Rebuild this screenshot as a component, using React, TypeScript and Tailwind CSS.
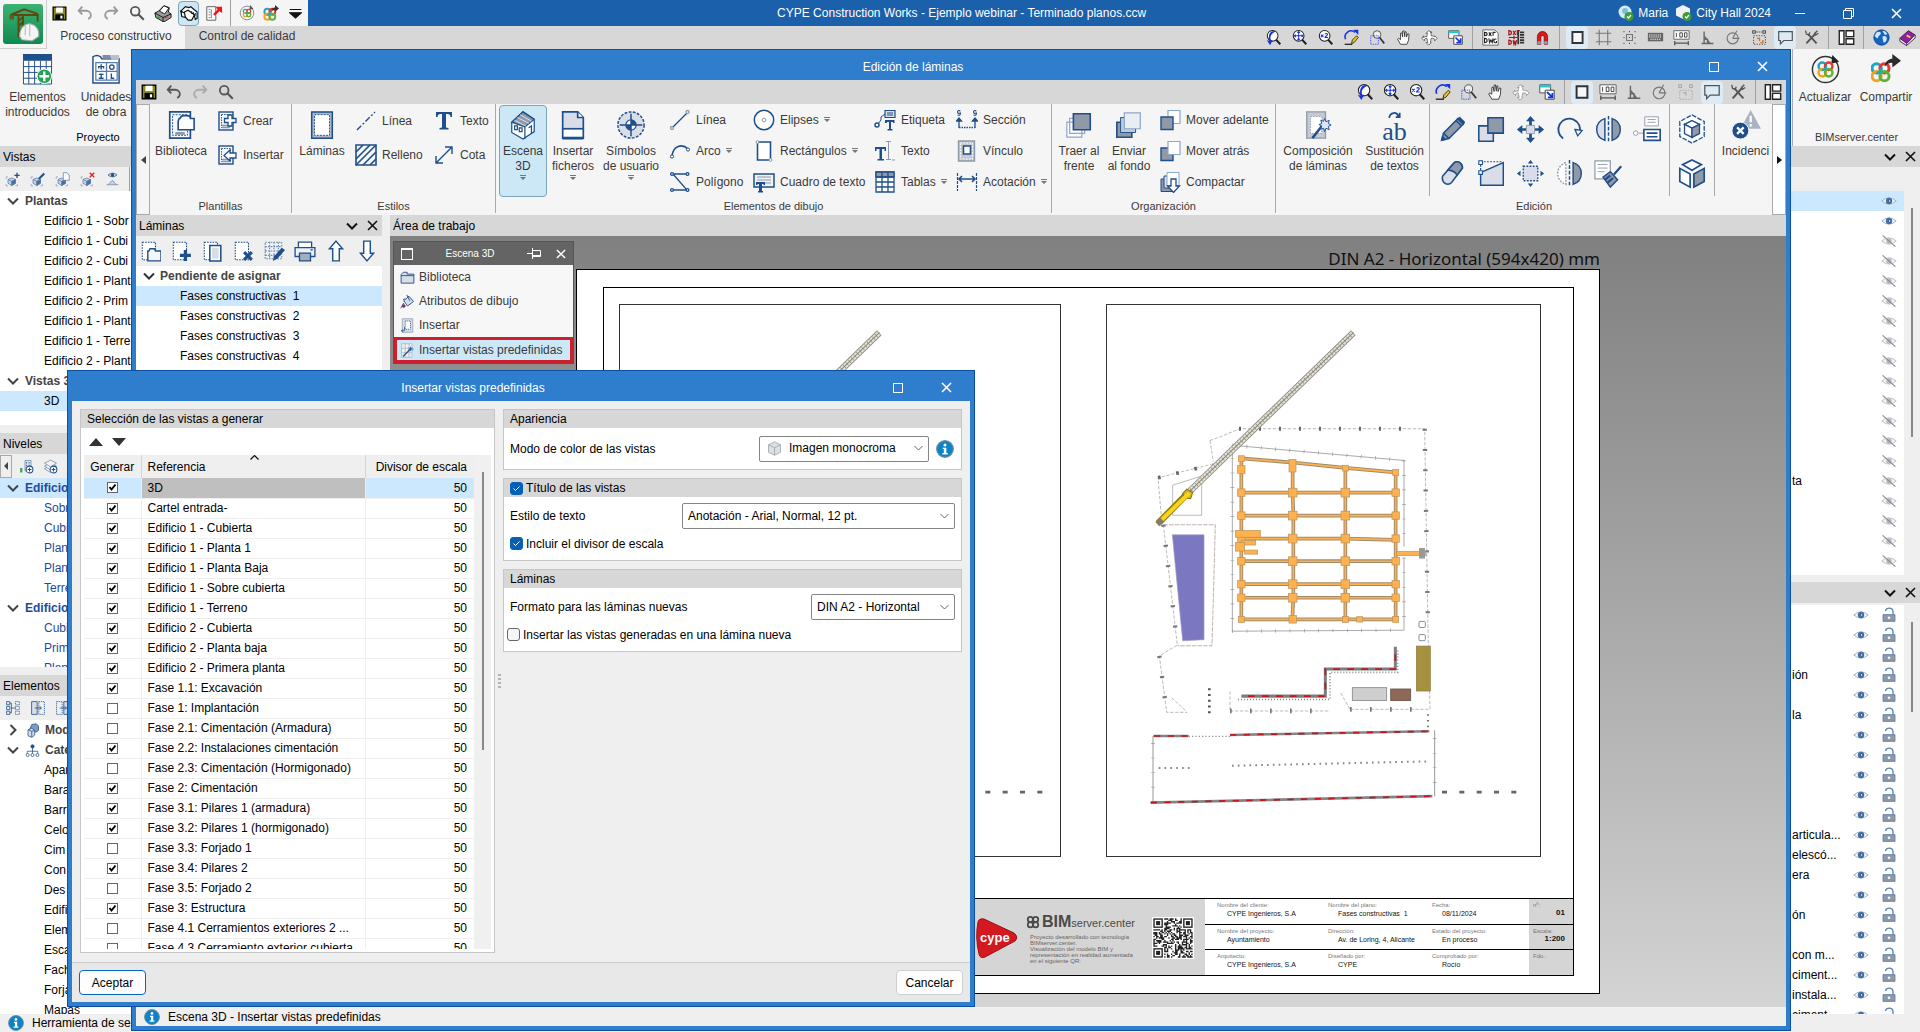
import React from "react";

const NAVY = "#1f4f8a";
const PALE = "#d9dde8";
const SLATE = "#8f99a8";

type IconProps = { n: string; s?: number; c?: string };

const star = (
  <g fill="none" strokeWidth="2.300">
    <circle cx="8" cy="8" r="3.500" stroke="#1ba8c8" />
    <circle cx="14" cy="8" r="3.500" stroke="#e2382f" />
    <circle cx="8" cy="14" r="3.500" stroke="#f5a11c" />
    <circle cx="14" cy="14" r="3.500" stroke="#5cb338" />
    <path d="M11.500 8a3.500 3.500 0 0 1-3.500 3.500" stroke="#1ba8c8" />
  </g>
);

const lens = (
  <g>
    <circle cx="9" cy="8" r="6.300" fill="#fff" stroke="#222" strokeWidth="1.200" />
    <path d="M13 12.500l5 5.500" stroke="#222" strokeWidth="2.400" />
  </g>
);

const miniCube = (
  <g stroke="#5b7ba5" fill="#c9d3e2" strokeWidth="1">
    <path d="M9 8l5 2v5l-5 3-5-3v-5z" />
    <path d="M4 10l5 2.500 5-2.500M9 12.500V18" fill="none" />
    <path d="M1.500 9V6.500H4M1.500 16v2.500H4M16.500 16v2.500H14" fill="none" stroke="#8ba0bd" />
    <path d="M9 12.500l5-2.500v5l-5 3z" fill="#47709f" />
  </g>
);

const pageDash = (
  <g>
    <rect x="3" y="2" width="14" height="18" fill="#f4f6f9" stroke={NAVY} strokeWidth="1.400" />
    <rect x="5.500" y="4.500" width="9" height="13" fill="none" stroke={NAVY} strokeDasharray="1.500 1" strokeWidth="0.900" />
    <path d="M6 15.500h8M6 17.500h8" stroke={SLATE} strokeWidth="1.400" />
  </g>
);

const sheetDash = <path d="M3 2h12v16H3z" fill="#fff" stroke={NAVY} strokeDasharray="1.500 1" />;

/* Drawings on a 20-unit grid */
const SMALL: Record<string, React.ReactNode> = {
  save: (
    <g>
      <path d="M2.500 2.500h15v15h-15z" fill="#8a8a14" stroke="#000" strokeWidth="1.500" />
      <path d="M6 3h8v6H6z" fill="#fff" />
      <path d="M5 11h10v6H5z" fill="#000" />
      <path d="M11 12.500h2.500V16H11z" fill="#fff" />
    </g>
  ),
  undo: <path d="M7 3L3 7.500l4 4M3.500 7.500h8a5 5 0 0 1 5 5v0a4.500 4.500 0 0 1-3 4" fill="none" stroke="currentColor" strokeWidth="2" />,
  redo: <path d="M13 3l4 4.500-4 4M16.500 7.500h-8a5 5 0 0 0-5 5v0a4.500 4.500 0 0 0 3 4" fill="none" stroke="currentColor" strokeWidth="2" />,
  search: <g fill="none" stroke="#555"><circle cx="8" cy="8" r="4.800" strokeWidth="2" /><path d="M11.500 11.500l6 6" strokeWidth="2.400" /></g>,
  printer: (
    <g stroke="#111" strokeWidth="1">
      <path d="M1 10l4-2 6-6 6 2-1 5 3 2v4l-8 5-9-5z" fill="#9a9a9a" />
      <path d="M6 8l5-6 5.500 2.500L12 11z" fill="#fff" />
      <path d="M1 10l9 5 9-4M10 15v5" fill="none" />
      <path d="M4 14l3 1.500" stroke="#2fae2f" strokeWidth="1.500" />
      <path d="M12 15.500l3-1.500" stroke="#e22" strokeWidth="1.500" />
    </g>
  ),
  plotter: (
    <g stroke="#111" strokeWidth="1.300" fill="#fff">
      <path d="M1 8l5-5 4 1 2-1 7 6v7l-2 1-1-4-7-5-4 4z" />
      <path d="M5 9l4-2 7 5-3 6H9l-5-6z" />
      <path d="M1 8l4 2 1 5-4-1z" />
      <path d="M13 8v3M15 9v3M17 10v3" strokeWidth="1" />
    </g>
  ),
  exportRed: (
    <g>
      <path d="M2 3h10v15H2z" fill="#fff" stroke="#555" />
      <path d="M4 6h2M4 9h2M4 12h2M4 15h2M7 6v10" stroke="#777" />
      <path d="M9 11l5-5-2-3h7v7l-3-2-5 5z" fill="#f11" />
    </g>
  ),
  bimRefresh: (
    <g>
      <circle cx="10" cy="10" r="8.500" fill="none" stroke="#888" strokeWidth="1.200" />
      <path d="M14 0l4 5-5 1z" fill="#555" />
      <g transform="translate(2.300 2.300) scale(.7)">{star}</g>
    </g>
  ),
  bimShare: (
    <g>
      <g transform="translate(-3 0) scale(1.050)">{star}</g>
      <path d="M10 10c0-5 3-7 5-7V0l5 4.500-5 4V6c-2 0-4 1-5 4z" fill="#333" />
    </g>
  ),
  more: <path d="M1 4h18M1 9h18l-9 8z" fill="#111" stroke="#111" strokeWidth="1.600" />,
  zPrev: <g>{lens}<path d="M14 3c-7-3-11 3-9 11l-3-1 4 6 3-6H7C5 9 8 4 14 3z" fill="#1733e0" /></g>,
  zFit: <g>{lens}<path d="M9 3v10M4 8h10M7.500 4.500L9 3l1.500 1.500M7.500 11.500L9 13l1.500-1.500M5.500 6.500L4 8l1.500 1.500M12.500 6.500L14 8l-1.500 1.500" stroke="#1733e0" fill="none" strokeWidth="1.200" /></g>,
  zX2: <g>{lens}<path d="M4.500 6.500l3 3M7.500 6.500l-3 3M9.500 6q1.500-1.500 3 0c0 2-3 2.500-3 4h3.500" stroke="#1733e0" fill="none" strokeWidth="1.300" /></g>,
  redraw: <g><path d="M3 12A7 7 0 0 1 14 4" fill="none" stroke="#1733e0" strokeWidth="1.800" /><path d="M12 1h6v6z" fill="#1733e0" /><path d="M11 13l5-5 2 2-5 6-3 1z" fill="#f0c419" stroke="#222" /><path d="M2 18h9" stroke="#222" strokeWidth="1.500" /></g>,
  zWin: <g><circle cx="9.500" cy="6.500" r="4.500" fill="#eee" stroke="#444" /><path d="M12.500 10l5.500 7" stroke="#333" strokeWidth="2" /><path d="M2 8h9v10H2z" fill="none" stroke="#1733e0" strokeDasharray="1 1" /></g>,
  hand: <path d="M6.500 18L3 12l1.500-1L6.500 12.500V5l1.500-.5 1 5V2.500l1.500-.5L11.500 9V3.500l1.500-.3.500 6.300 1.500-4 1.500.5-.5 7-2 5z" fill="#fff" stroke="#333" />,
  orbit: <path d="M9 2l-3 3h2c-1 2-1 3-1 4-2 0-3 0-4 1l0-2-2 3 3 3v-2c1-1 3-1 3-1 0 2 1 3 1 5H6l3 3 3-3h-1c0-2 1-3 1-5 2 0 3 0 4 1v2l3-3-3-3v1c-1-1-3-1-4-1 0-1 0-3-1-4h2z" fill="#fff" stroke="currentColor" />,
  cascade: <g><path d="M2 2h12v9H2z" fill="#fff" stroke="#444" /><path d="M2 2h12v3H2z" fill="#29c6d6" /><path d="M8 8h10v10H8z" fill="#fff" stroke="#333" /><path d="M10 10l6 6M16 11v5h-5" stroke="#1733e0" strokeWidth="2" fill="none" /></g>,
  dxf: <g><path d="M1 1h14l4 4v14H1z" fill="#fff" stroke="#555" /><path d="M3 4q3 0 3 2t-3 2zM8 4l3 4M11 4L8 8M13 8V4h3M3 11q3 0 3 2.500T3 16zM8 11l1 5 1.500-3 1.500 3 1-5M17 12q-3-1-3 2t3 2v-2" stroke="#222" fill="none" strokeWidth="1.300" /></g>,
  dxfRed: <g><path d="M12 2v16M14 4h5M14 7h5M14 10h5M14 13h5M14 16h5" stroke="#333" strokeWidth="2" /><path d="M1 2q3 0 3 2.500T1 7zM6 2l3 5M9 2L6 7M11 7V2h3M1 13q3 0 3 2.500T1 18zM6 13l1 5 1-3 1 3 1-5M1 10h12M7 8v4" stroke="#a11515" fill="none" strokeWidth="1.400" /></g>,
  magnet: <g><path d="M4 18V9a6 6 0 0 1 12 0v9h-4V9.500a2 2 0 0 0-4 0V18z" fill="#e01818" stroke="#600" strokeWidth=".8" /><path d="M4 14.500h4V18H4zM12 14.500h4V18h-4z" fill="#8d9db5" /></g>,
  rect: <path d="M4 3.500h12v13H4z" fill="#f4f8fb" stroke="#333" strokeWidth="2.200" />,
  grid: <path d="M5 1v18M15 1v18M1 5h18M1 15h18" stroke="#777" fill="none" strokeWidth="1.300" />,
  snap: <g><path d="M6.500 6.500h7v7h-7z" fill="none" stroke="#777" strokeWidth="1.300" /><path d="M3 3h1M9.500 3h1M16 3h1M3 10h1M16 10h1M3 17h1M9.500 17h1M16 17h1M9.500 10h1" stroke="#333" strokeWidth="1.400" /></g>,
  keyboard: <g><path d="M1 4.500h18v10H1z" fill="#666" /><path d="M2.500 7h15M2.500 9.500h15M4 12h12" stroke="#eee" strokeDasharray="1.500 1" strokeWidth="1.200" /></g>,
  ruler: <g><path d="M1 2h18v10H1z" fill="#fff" stroke="#555" /><path d="M4 4.500v5M8 4.500h3v5H8zM13.500 4.500h3v5h-3z" stroke="#333" fill="none" /><path d="M2 16.500h16M2 14v5M18 14v5" stroke="#555" strokeWidth="1.500" /></g>,
  perp: <path d="M3 17h14M6 3v14M6 8l7 9M6 12h4v5" stroke="#666" strokeWidth="1.600" fill="none" />,
  angle: <g fill="none" stroke="#777" strokeWidth="1.300"><circle cx="9" cy="11" r="6.500" /><path d="M9 11h8M9 11l5-9" /></g>,
  dots: <g stroke="#555" fill="none" strokeWidth="1.300"><path d="M3 8h14v10H3z" strokeDasharray="1.500 1.500" /><path d="M2 2h3v3H2zM14 2h3v3h-3z" /><path d="M6 3.500h7" strokeDasharray="2 1" /><path d="M7 11h3v3M14 13v3h-3" stroke="#c9772f" strokeWidth="1.600" /></g>,
  dotsOff: <g stroke="#aaa" fill="none" strokeWidth="1.200"><path d="M3 8h14v10H3z" strokeDasharray="1.500 1.500" /><path d="M2 2h3v3H2zM14 2h3v3h-3zM7 11h3v3" /></g>,
  comment: <path d="M2 3h16v10.500H8l-4 4v-4H2z" fill="none" stroke="#555" strokeWidth="1.400" />,
  tools: <g stroke="#555" fill="none"><path d="M4 17L15 5" strokeWidth="2.200" /><path d="M16 17L6 6" strokeWidth="2.200" /><path d="M3 2l1 4 3 1 1-3M17 2l-3 3 1 2 3-2" strokeWidth="1.500" /></g>,
  layout: <path d="M1.500 2h5.500v16H1.500zM9.500 2h9v7h-9zM9.500 11.500h9V18h-9z" fill="#fff" stroke="#222" strokeWidth="1.600" />,
  globe: <g><circle cx="10" cy="10" r="9" fill="#1565c0" stroke="#0b3f86" /><path d="M4 4c4-2 6 0 5 2s-3 2-3 4-3 0-4-2zM11 9c4-2 6 1 5 4s-4 4-4 1zM11 2c3 0 5 2 6 4l-3 1z" fill="#cfe6fa" /></g>,
  book: <g stroke="#40104d"><path d="M1 11l10-9 8 5-10 10z" fill="#8d1fa0" /><path d="M1 11v3.500l8 5V17zM9 19.500l10-9V7" fill="#eee" /><path d="M9 7.500l4.500 2.500" stroke="#f4d03f" strokeWidth="2.200" /></g>,
  cubePlus: <g>{miniCube}<path d="M16 1v7M12.500 4.500h7" stroke={NAVY} strokeWidth="1.800" /></g>,
  cubePen: <g>{miniCube}<path d="M11 10l1-3 6-6 2 2-6 6z" fill={NAVY} /></g>,
  cubeCopy: <g>{miniCube}<path d="M11 1h5l3 3v7h-8z" fill="#fff" stroke="#5b7ba5" /></g>,
  cubeDel: <g>{miniCube}<path d="M13 1l6 6M19 1l-6 6" stroke="#e32222" strokeWidth="1.800" /></g>,
  viewEye: <g stroke={NAVY} fill="none"><path d="M4 4q6-5 12 0-6 5-12 0z" /><circle cx="10" cy="4" r="2" fill={NAVY} /><path d="M2 17h16M4 17l6-6 5 6" stroke="#6b88ad" fill="#c9d3e2" /></g>,
  levels: <g><path d="M8 2h8v14H8z" fill="#dfe5ee" stroke="#6b88ad" /><path d="M10 4v10M13.500 4v6" stroke="#47709f" strokeDasharray="2 1.500" strokeWidth="1.500" /><path d="M3 18v-6" stroke="#3aa757" strokeWidth="3" /><circle cx="14" cy="14" r="4.500" fill="#fff" stroke={NAVY} strokeWidth="1.400" /><path d="M14 11.500v5M11.500 14h5" stroke={NAVY} strokeWidth="1.400" /></g>,
  layers: <g fill="#f4f4f4" stroke="#6b88ad"><path d="M10 9l8 4-8 5-8-5z" /><path d="M10 5.500l8 4-8 5-8-5z" /><path d="M10 1.500l8 4-8 5-8-5z" /><circle cx="14" cy="14" r="4.500" fill="#fff" stroke={NAVY} strokeWidth="1.400" /><path d="M14 11.500v5M11.500 14h5" stroke={NAVY} strokeWidth="1.400" /></g>,
  expand1: <g fill="none" stroke={NAVY}><path d="M2 2h4v4H2zM2 8h4v4H2zM2 14h4v4H2zM6 4h2v12H6M8 10h5" /><path d="M13 2h5v4h-5zM13 8h5v4h-5zM13 14h5v4h-5z" strokeDasharray="1.500 1" /></g>,
  expand2: <g fill="none" stroke={NAVY}><path d="M2 2h7v16H2z" fill={PALE} /><path d="M11 2h7v16h-7z" strokeDasharray="1.500 1" /><path d="M6 10h8M12 8l2.500 2-2.500 2" /></g>,
  expand3: <g fill="none" stroke={NAVY}><path d="M2 2h7v16H2z" strokeDasharray="1.500 1" /><path d="M11 2h7v16h-7z" fill={PALE} /><path d="M6 10h8M12 8l2.500 2-2.500 2" /></g>,
  cubeBlue: <g stroke={NAVY}><path d="M9 2l6-1 3 3v6l-3 2H9L6 9z" fill="#7f9cc0" /><path d="M4 9l5-2 4 3v6l-4 3-5-2z" fill={PALE} /><path d="M4 9l5 2 4-1M9 11v8" fill="none" /></g>,
  tree: <g fill="#fff" stroke={NAVY}><path d="M10 6v5M3 14v-3h14v3M10 11v3" fill="none" /><circle cx="10" cy="4.500" r="2.200" fill={NAVY} /><circle cx="3.500" cy="16" r="2" /><circle cx="10" cy="16" r="2" /><circle cx="16.500" cy="16" r="2" /></g>,
  eye: <g><path d="M1 10q9-8 18 0-9 8-18 0z" fill="#f2f5f9" stroke="#8da3bf" /><circle cx="10" cy="10" r="4" fill="#4a719f" /><circle cx="10.800" cy="10" r="1.600" fill="#dfe7f1" stroke={NAVY} /></g>,
  eyeOff: <g><path d="M1 10q9-8 18 0-9 8-18 0z" fill="#f4f4f4" stroke="#b3b3b3" /><circle cx="10" cy="10" r="3.400" fill="#b3b9c2" /><path d="M2 3l16 14" stroke="#868b93" strokeWidth="1.500" /></g>,
  lock: <g><path d="M5.500 5q1-3.500 5-3.500T15 5.500V10" fill="none" stroke="#5b82b0" strokeWidth="1.600" /><path d="M2.500 9.500h15v8.500h-15z" fill="#8f99a8" stroke="#5b7ba5" /><circle cx="10" cy="13.500" r="1.500" fill="#fff" /></g>,
  shLib: <g>{sheetDash}<path d="M8 10h1l1-2h4l1 2h5v9H8z" fill="#f4f6f9" stroke={NAVY} strokeWidth="1.300" /></g>,
  shAdd: <g>{sheetDash}<path d="M14 9v10M9 14h10" stroke={NAVY} strokeWidth="3" /></g>,
  shCopy: <g>{sheetDash}<path d="M8 5h10v14H8z" fill="#fff" stroke={NAVY} strokeWidth="1.400" /><path d="M10 7h6v10h-6z" fill={PALE} /></g>,
  shDel: <g>{sheetDash}<path d="M11 11l7 7M18 11l-7 7" stroke={NAVY} strokeWidth="2.800" /></g>,
  shEdit: <g><path d="M2 2h15v15H2zM2 6h15M2 10h15M2 14h15M6 2v15M10 2v15M14 2v15" fill="#eef1f6" stroke="#6b88ad" strokeDasharray="1.500 1" /><path d="M9 19l1-4 7-8 3 2-7 8z" fill={NAVY} /></g>,
  shPrint: <g stroke={NAVY} strokeWidth="1.200"><path d="M4 2h12v5H4z" fill="#fff" /><path d="M1 7h18v8H1z" fill="#eef1f6" /><path d="M5 12h10v7H5z" fill="#a4afbe" /><path d="M15 9h2" /></g>,
  up: <path d="M10 1l6 7h-3v11H7V8H4z" fill="#fff" stroke={NAVY} strokeWidth="1.300" />,
  down: <path d="M10 19l6-7h-3V1H7v11H4z" fill="#fff" stroke={NAVY} strokeWidth="1.300" />,
  folder: <path d="M1.500 6l3-3h5v2.500h9v12h-17zM1.500 7.500h17" fill={PALE} stroke={NAVY} strokeWidth="1.200" />,
  bucket: <g stroke={NAVY} strokeWidth="1.200"><path d="M5 9l7-6 6 7-8 6z" fill={PALE} /><path d="M1 19l4-7M9 1l4 8M4 8l3-2" fill="none" /><circle cx="5" cy="16" r="2.400" fill="#7a2c55" stroke="none" /></g>,
  insert: <g><path d="M3 1h14v18H3z" fill={PALE} stroke={SLATE} /><path d="M7 4h7v11H7z" fill="#fff" stroke={NAVY} strokeDasharray="1.500 1" /><path d="M6 12v5H2M4 15l-2 2 2 2" stroke={NAVY} fill="none" /></g>,
  wand: <g><path d="M2 1h14v18H2zM2 7h14M2 13h14M7 1v18M12 1v18" fill="#eef0f4" stroke="#aab2be" /><path d="M4 18l9-9" stroke={NAVY} strokeWidth="1.600" /><path d="M14 5v6M11 8h7M12 6l4 4M16 6l-4 4" stroke={NAVY} /></g>,
  info: <g><circle cx="10" cy="10" r="9.300" fill="#0a84c8" stroke="#7d8b96" strokeWidth="1.200" /><circle cx="10" cy="5.500" r="1.700" fill="#fff" /><path d="M7.500 8.500h4v6h1.500v1.500h-6v-1.500h1.700V10H7.500z" fill="#fff" /></g>,
  cubeGray: <g stroke="#9a9fa6" fill="#dcdfe3"><path d="M10 1l8 4v10l-8 4-8-4V5z" /><path d="M2 5l8 4 8-4M10 9v10" fill="none" /></g>,
};

/* Drawings on a 22-unit grid, used beside ribbon labels */
const MED: Record<string, React.ReactNode> = {
  crear: <g>{pageDash}<path d="M12 5h4v3.500h4v4h-4V16h-4v-3.500H8.500v-4H12z" fill="#fff" stroke={NAVY} strokeWidth="1.300" /></g>,
  insertar: <g>{pageDash}<path d="M20 9v5h-6v3l-6-5.500 6-5.500v3z" fill="#fff" stroke={NAVY} strokeWidth="1.300" /></g>,
  lineStyle: <path d="M2 20L20 2" stroke={NAVY} strokeWidth="1.400" strokeDasharray="6 2 2 2" />,
  hatch: <g stroke={NAVY} strokeWidth="1.600" fill="none"><path d="M1 1h20v20H1z" /><path d="M1 8l7-7M1 15L15 1M1 21L21 1M8 21L21 8M15 21l6-6" /></g>,
  bigT: <path d="M3 2h16v5h-1.500c0-2-1-3-3-3H13v13.500l2.500.5v1.500h-9V18l2.500-.5V4H7.500c-2 0-3 1-3 3H3z" fill={NAVY} />,
  dim: <path d="M3 19L19 3M3 12v7h7M12 3h7v7" stroke={NAVY} strokeWidth="1.400" fill="none" />,
  line: <g stroke={NAVY} strokeWidth="1.300" fill="#fff"><path d="M3 19L19 3" /><circle cx="3" cy="19" r="1.500" stroke={SLATE} /><circle cx="18.500" cy="3" r="1.500" stroke={SLATE} /></g>,
  arc: <g stroke={NAVY} strokeWidth="1.600" fill="none"><path d="M3 16C4 6 13 3 19 9" /><circle cx="3" cy="16.500" r="1.600" fill="#fff" strokeWidth="1" /><circle cx="19" cy="9.500" r="1.600" fill="#fff" strokeWidth="1" /></g>,
  poly: <g stroke={NAVY} strokeWidth="1.300" fill="none"><path d="M18.500 3H3M4 3l14 16H3" /><circle cx="3" cy="3" r="1.400" fill="#fff" /><circle cx="18.500" cy="3" r="1.400" fill="#fff" /><circle cx="3" cy="19" r="1.400" fill="#fff" /><circle cx="18.500" cy="19" r="1.400" fill="#fff" /></g>,
  ellipse: <g stroke={NAVY} fill="#fff"><circle cx="11" cy="11" r="9.700" strokeWidth="1.500" /><circle cx="11" cy="11" r="1.800" stroke={SLATE} /></g>,
  rectangle: <g stroke={NAVY} fill="#fff"><path d="M4.500 2h13v18h-13z" strokeWidth="1.600" /><circle cx="4.500" cy="2" r="1.400" stroke={SLATE} /><circle cx="17.500" cy="20" r="1.400" stroke={SLATE} /></g>,
  textbox: <g><path d="M1 3h20v13H1z" fill="#eef1f6" stroke={NAVY} strokeWidth="1.500" /><path d="M4 6h14M4 9h14M12 12h6" stroke={SLATE} /><path d="M3 11h9v3h-1.500v-1H9v7h1v1.500H5V20h1v-7H4.500v1H3z" fill={NAVY} /></g>,
  tag: <g stroke={NAVY} fill="#fff"><path d="M11 1.500h10v7H11z" fill={PALE} strokeWidth="1.200" /><path d="M13 4h6M13 6h6M11 5L7 8v3l-3 4" fill="none" /><circle cx="3" cy="16" r="2" strokeWidth="1.500" /><path d="M11 11h9.500v3H19v-1h-2v7h1.500v1.500h-5V20H15v-7h-2v1h-2z" fill={NAVY} stroke="none" /></g>,
  text: <g><path d="M1 7h11v4h-1.500V9H8v10h2v1.500H3.500V19h2V9h-3v2H1z" fill={NAVY} /><path d="M14.500 1.500v18M12 1.500h5M12 19.500h5M18 20h3" stroke={SLATE} fill="none" /></g>,
  table: <g stroke={NAVY} strokeWidth="1.300"><path d="M2 1h18v20H2z" fill="#fff" /><path d="M2 1h18v5H2z" fill={SLATE} /><path d="M2 6h18M2 11h18M2 16h18M8 1v20M14 1v20" fill="none" /></g>,
  section: <g stroke={NAVY} fill="none" strokeWidth="1.300"><path d="M3 18.500h16" strokeDasharray="1.500 1" strokeWidth="1.600" /><path d="M3 19v-8M19 19v-8" /><path d="M.5 12L3 9l2.500 3zM16.500 12L19 9l2.500 3z" fill={NAVY} /><path d="M4.500 2q-3-1-3 1t3 1q0 3-3 2M20.500 2q-3-1-3 1t3 1q0 3-3 2" strokeWidth="1.100" /></g>,
  link: <g><path d="M2.500 1h16v20h-16z" fill="#c4c9d2" stroke={SLATE} strokeWidth="1.400" /><path d="M4.500 3h12v16h-12z" fill="none" stroke="#fff" strokeDasharray="1.500 1.500" /><path d="M7.500 6h7v8h-7z" fill="#fff" stroke={NAVY} strokeWidth="1.600" /></g>,
  measure: <g stroke={NAVY} fill="none"><path d="M1.500 2v18M20.500 2v18" strokeDasharray="3 1" strokeWidth="1.200" /><path d="M3 8h16M6 5L3 8l3 3M16 5l3 3-3 3" strokeWidth="1.600" /></g>,
  fwd: <g><path d="M9 1.500h12v13H9z" fill="#fff" stroke="#8ba7cc" strokeWidth="1.200" /><path d="M2 8h12v12.500H2z" fill={SLATE} stroke={NAVY} strokeWidth="1.400" /></g>,
  back: <g><path d="M2 8h12v12.500H2z" fill={SLATE} stroke={NAVY} strokeWidth="1.400" /><path d="M9 1.500h12v13H9z" fill="#fff" stroke="#8ba7cc" strokeWidth="1.200" /></g>,
  compact: <g stroke={NAVY}><path d="M2 8h12v12.500H2z" fill={SLATE} /><path d="M5 5h12v12H5z" fill={PALE} /><path d="M8 1.500h12v13H8z" fill="#fff" stroke="#8ba7cc" /><path d="M12 8h5v7h3.500l-6 6.500-6-6.500H12z" fill="#fff" strokeWidth="1.300" /></g>,
};

/* Drawings on a 32-unit grid */
const BIG: Record<string, React.ReactNode> = {
  elements: <g><path d="M1 1h30v30H1z" fill="#fff" /><path d="M1.500 7v24h29V7M1 13h30M1 19h30M1 25h30M7 7v24M13 7v24M19 7v24M25 7v24" fill="none" stroke={NAVY} /><path d="M1 0h30v7H1z" fill="#1f4f8a" /><circle cx="23" cy="23" r="7.500" fill="#23a455" stroke="#fff" /><path d="M23 18v10M18 23h10" stroke="#fff" strokeWidth="2.400" /></g>,
  units: <g><path d="M2 3q4-3 8 0l1 2h18v25H2z" fill="#fff" stroke={NAVY} strokeWidth="1.500" /><path d="M12 1h8l1 5h-9z" fill="#7f8aa8" /><path d="M20 1h9v5h-8z" fill="#b9bfd2" /><path d="M5 9h22v18H5zM16 9v18M5 18h22" fill="none" stroke="#5b7ba5" strokeWidth="1.300" /><path d="M8 15v-2h5v2M10.500 10.500V16M8 21h5M10.500 20v5M8 25h5M21 20v5h3" fill="none" stroke={NAVY} strokeWidth="1.400" /><circle cx="21.500" cy="13.500" r="2.300" fill="none" stroke={NAVY} strokeWidth="1.400" /></g>,
  library: <g><path d="M4 2h22v28H4z" fill="#f4f6f9" stroke={NAVY} strokeWidth="1.800" /><path d="M7 5h16v22H7z" fill="none" stroke={NAVY} strokeDasharray="2 1.300" /><path d="M14 9h1q1-3 4-3h4q3 0 3 3h4v12H13V12z" fill="#fff" stroke={NAVY} strokeWidth="1.700" /><path d="M10 23.500h10v3H10z" fill={SLATE} /></g>,
  sheets: <g><path d="M5 2h22v28H5z" fill="#aeb6c4" stroke={NAVY} strokeWidth="1.600" /><path d="M8 5h16v22H8z" fill="#fff" stroke={NAVY} strokeDasharray="2 1.300" /></g>,
  scene: <g stroke={NAVY} strokeWidth="1.300"><path d="M4 13L16 2l12 8v13L16 31 4 24z" fill="#fff" /><path d="M4 13L16 2l12 8-10 8z" fill={SLATE} /><path d="M7 11l12 6M10 8l12 6M13 5l12 7" stroke="#dfe5ee" strokeWidth="1" /><path d="M18 18v13M7 17h3v4H7zM12 19h3v4h-3zM22 19l3-2v8" fill="none" /></g>,
  files: <g stroke={NAVY} strokeWidth="1.800"><path d="M5 2h16l6 6v12H5z" fill={PALE} /><path d="M21 2v6h6M5 20v10h22V20" fill="#fff" /><path d="M5 20h22" /><path d="M5 30h22" strokeWidth="3" /></g>,
  symbols: <g><circle cx="16" cy="16" r="14" fill={PALE} stroke={NAVY} strokeWidth="1.600" strokeDasharray="3 1.500" /><circle cx="16" cy="16" r="5.500" fill="#fff" stroke={NAVY} strokeWidth="1.300" /><path d="M16 10.500a5.500 5.500 0 0 1 5.500 5.500H10.500a5.500 5.500 0 0 0 5.500 5.500z" fill={NAVY} /><path d="M16 4v24M4 16h24" stroke={NAVY} strokeWidth="1.600" /></g>,
  front: <g><path d="M3 13h16v16H3zM6 9h16v16H6z" fill="#fff" stroke="#8ba7cc" strokeWidth="1.300" /><path d="M10 4h18v17H10z" fill={SLATE} stroke={NAVY} strokeWidth="1.700" /></g>,
  rear: <g><path d="M3 13h16v16H3z" fill={SLATE} stroke={NAVY} strokeWidth="1.700" /><path d="M7 8h16v16H7z" fill="#c3cad6" stroke={NAVY} /><path d="M11 3h17v17H11z" fill="#e9edf4" stroke="#8ba7cc" strokeWidth="1.300" /></g>,
  compose: <g><path d="M4 2h20v28H4z" fill="#c4c9d2" stroke={SLATE} strokeWidth="1.400" /><path d="M8 7h12v18H8z" fill="#fff" stroke={SLATE} strokeDasharray="1.500 1.500" /><path d="M10 30l11-14" stroke={NAVY} strokeWidth="2.600" /><path d="M23 9l1.500 3.500L28 11l-1 3.500 3 1.500-3 1.500 1 3.500-3.500-1.500L23 23l-1-3.500-3 1 1-3.500-3-1.500 3-1-1-3.500 3 1z" fill="#dbe8f5" stroke={NAVY} /></g>,
  replace: <path d="M5 18C7 5 22 3 26 14M29 6v10h-9" fill="none" stroke={NAVY} strokeWidth="4" />,
  pencil: <g stroke={NAVY} strokeWidth="1.600"><path d="M4 28l2-8L22 4l6 6-16 16z" fill={SLATE} /><path d="M20 6l6 6M6 20l6 6" /><path d="M22 4l2-1 5 5-1 2zM4 28l1-4 3 3z" fill={NAVY} /></g>,
  copy: <g stroke={NAVY} strokeWidth="1.700"><path d="M2 12h16v17H2z" fill={PALE} /><path d="M12 3h17v17H12z" fill={SLATE} /></g>,
  move: <g fill={NAVY}><path d="M16 1l5 6h-3.500v5h-3V7H11zM16 31l5-6h-3.500v-5h-3v5H11zM1 16l6-5v3.500h5v3H7V21zM31 16l-6-5v3.500h-5v3h5V21z" /><path d="M11.500 11.500h9v9h-9z" fill={PALE} stroke={SLATE} /></g>,
  rotate: <g fill="none" stroke={NAVY} strokeWidth="2"><path d="M9 26A12 12 0 1 1 27 20" /><path d="M22 16l8 1-5 6z" fill="#fff" strokeWidth="1.400" /></g>,
  mirror: <g stroke={NAVY} strokeWidth="1.600"><path d="M12 4C0 8 0 24 12 28z" fill={PALE} /><path d="M20 4c12 4 12 20 0 24z" fill={SLATE} /><path d="M16 1v30" strokeDasharray="4 2" /></g>,
  props: <g stroke={SLATE}><path d="M13 2h15v10H13z" fill="#fff" /><path d="M16 5h9M16 8h9" /><circle cx="3" cy="20" r="2.500" fill="#fff" /><path d="M6 20h6" /><path d="M12 16h18v12H12z" fill="#fff" stroke={NAVY} strokeWidth="1.800" /><path d="M15 20h12M15 24h12" stroke={NAVY} strokeWidth="1.800" /></g>,
  eraser: <g stroke={NAVY} strokeWidth="1.700"><path d="M5 19L18 4q3-2 6 0t3 6L15 26q-3 3-7 1t-3-8z" fill={PALE} /><path d="M11 12L18 4q3-2 6 0t3 6l-6 8q-2-5-10-6z" fill={SLATE} /></g>,
  scale: <g stroke={NAVY} fill={PALE} strokeWidth="1.600"><path d="M4 15L29 4v25H4z" /><path d="M4 3h24M4 3v12" strokeDasharray="2 1.500" fill="none" strokeWidth="1.300" /><path d="M2 2h4v4H2zM2 13h4v4H2z" fill="#fff" strokeWidth="1.200" /></g>,
  stretch: <g fill={NAVY}><path d="M16 1l3 4h-6zM16 31l3-4h-6zM1 16l4-3v6zM31 16l-4-3v6z" /><path d="M8 8h16v16H8z" fill={PALE} stroke={NAVY} strokeDasharray="2 1.500" strokeWidth="1.500" /></g>,
  mirror2: <g stroke={NAVY} strokeWidth="1.600"><path d="M12 4C0 8 0 24 12 28z" fill="#fff" stroke={SLATE} strokeDasharray="2 1.500" /><path d="M20 4c12 4 12 20 0 24z" fill={SLATE} /><path d="M16 1v30" strokeDasharray="4 2" /></g>,
  brush: <g><path d="M1 2h17v20H1z" fill="#fff" stroke={SLATE} strokeWidth="1.300" /><path d="M4 6h11M4 10h11M4 14h8" stroke={SLATE} /><path d="M10 20l8-6 8 9-8 8z" fill={SLATE} stroke={NAVY} strokeWidth="1.600" /><path d="M12 23l6-5M15 26l6-5M22 17l8-9" stroke={NAVY} strokeWidth="2.400" /></g>,
  cubeHex: <g stroke={NAVY} strokeWidth="1.400"><path d="M16 1l13 7v16l-13 7-13-7V8z" fill="#fff" strokeDasharray="5 1.500" /><path d="M16 7l8 4-8 4-8-4z" fill="#fff" /><path d="M8 11l8 4v10l-8-4z" fill="#fff" /><path d="M24 11l-8 4v10l8-4z" fill={SLATE} /></g>,
  cubeOpen: <g stroke={NAVY} strokeWidth="1.800"><path d="M16 1l10 5-10 6L6 6z" fill="#fff" /><path d="M3 10l11 6v14L3 24z" fill="#fff" /><path d="M29 10l-11 6v14l11-6z" fill={SLATE} /></g>,
  issues: <g><path d="M21 0l11 20H10z" fill="#aab2c4" /><path d="M21 6v7M21 15v2.500" stroke="#fff" strokeWidth="2.400" /><circle cx="10" cy="22" r="9" fill={NAVY} stroke="#f5f5f5" /><path d="M6.500 18.500l7 7M13.500 18.500l-7 7" stroke="#fff" strokeWidth="2.400" /></g>,
  update: <g><circle cx="16" cy="16" r="13.500" fill="none" stroke="#333" strokeWidth="1.500" /><path d="M23 1l7 7-8 2z" fill="#222" /><g transform="translate(3.900 3.900) scale(1.100)">{star}</g></g>,
  share: <g><g transform="translate(-5 4) scale(1.350)">{star}</g><path d="M14 13c1-6 5-8 8-8V0l9 7-9 7V9c-3 0-5 1-8 4z" fill="#2b2b2b" /></g>,
  app: (
    <g>
      <path d="M5 8l12-5 12 4M6 8h24M12 8v20M16 8v20M12 13l4-3M12 18l4-4M12 23l4-4M29 8v6" stroke="#5a4a10" strokeWidth="1.700" fill="none" />
      <path d="M4 8h4v4H4z" fill="#6b5814" />
      <path d="M13 27c0-8 5-12 10-11s8 6 7 11l-6 4-9-1z" fill="#f4f4f4" stroke="#9aa" />
      <path d="M18 17v9M22 16v11" stroke="#b9bfc4" />
    </g>
  ),
};

function Icon({ n, s = 20, c = "text-[#555]" }: IconProps) {
  const body = SMALL[n] ?? MED[n] ?? BIG[n];
  const box = SMALL[n] ? 20 : MED[n] ? 22 : 32;
  return (
    <svg viewBox={`0 0 ${box} ${box}`} width={s} height={s} className={`shrink-0 ${c}`} aria-hidden="true">
      {body}
    </svg>
  );
}

function Caret() {
  return (
    <svg viewBox="0 0 6 5" width="6" height="5" className="shrink-0" aria-hidden="true">
      <path d="M0 0h6v1H0zM0 2h6L3 5z" fill="#777" />
    </svg>
  );
}

function Chevron({ open = true, s = 12, color = "#333" }: { open?: boolean; s?: number; color?: string }) {
  return (
    <svg viewBox="0 0 12 12" width={s} height={s} className="shrink-0" aria-hidden="true">
      <path d={open ? "M1 3.500l5 5 5-5" : "M3.500 1l5 5-5 5"} fill="none" stroke={color} strokeWidth="2" />
    </svg>
  );
}

function Cross({ color = "#111", s = 11 }: { color?: string; s?: number }) {
  return (
    <svg viewBox="0 0 11 11" width={s} height={s} aria-hidden="true">
      <path d="M1 1l9 9M10 1l-9 9" stroke={color} strokeWidth="1.600" />
    </svg>
  );
}

function TBtn({ n, on = false, s = 18, c, w = "w-[26px]" }: { n: string; on?: boolean; s?: number; c?: string; w?: string }) {
  return (
    <button aria-label={n} className={`flex h-full shrink-0 items-center justify-center ${w}`}>
      <span className={`flex h-[23px] w-[22px] items-center justify-center rounded ${on ? "bg-[#dcebf5]" : ""}`}>
        <Icon n={n} s={s} c={c} />
      </span>
    </button>
  );
}

function VSep() {
  return <span className="flex w-[9px] shrink-0 justify-center self-stretch"><span className="w-px bg-[#a0a0a0]" /></span>;
}

function WinButtons({ min = false }: { min?: boolean }) {
  return (
    <div className="flex h-full shrink-0">
      {min && (
        <button aria-label="Minimizar" className="flex w-12 items-center justify-center"><span className="h-px w-[10px] bg-white" /></button>
      )}
      <button aria-label="Maximizar" className="flex w-12 items-center justify-center">
        {min ? (
          <svg viewBox="0 0 11 11" width="11" height="11"><path d="M.5 2.500h8v8h-8zM2.500 2.500v-2h8v8h-2" fill="none" stroke="#fff" /></svg>
        ) : (
          <span className="size-[10px] border border-white" />
        )}
      </button>
      <button aria-label="Cerrar" className="flex w-12 items-center justify-center"><Cross color="#fff" /></button>
    </div>
  );
}

function PanelHead({ title, tools = true }: { title: string; tools?: boolean }) {
  return (
    <div className="flex h-[21px] shrink-0 items-center bg-[#d7d7d7] pr-[4px] pl-[3px] text-black">
      <span className="flex-1 truncate">{title}</span>
      {tools && (
        <span className="flex gap-[9px]">
          <button aria-label="Contraer"><Chevron color="#111" /></button>
          <button aria-label="Cerrar panel"><Cross /></button>
        </span>
      )}
    </div>
  );
}

function Big({ n, a, b, w, caret = false, on = false }: { n: string; a: string; b?: string; w: string; caret?: boolean; on?: boolean }) {
  return (
    <button className={`mt-px flex h-[92px] shrink-0 flex-col items-center rounded-[4px] border pt-[4px] leading-[15px] text-[#3a3a3a] ${on ? "border-[#7aa5bb] bg-[#cce8f6]" : "border-transparent"} ${w}`}>
      {n === "replace" ? (
        <span className="flex h-[30px] flex-col items-center">
          <Icon n={n} s={14} />
          <span className="-mt-px font-['Liberation_Serif',serif] text-[26px] leading-[17px] text-[#1f4f8a]">ab</span>
        </span>
      ) : (
        <Icon n={n} s={30} />
      )}
      <span className="mt-[4px] whitespace-nowrap">{a}</span>
      {b && <span className="whitespace-nowrap">{b}</span>}
      {caret && <span className="mt-px"><Caret /></span>}
    </button>
  );
}

function Small({ n, t, caret = false }: { n: string; t: string; caret?: boolean }) {
  return (
    <button className="flex flex-1 items-center gap-[5px] whitespace-nowrap text-[#3a3a3a]">
      <Icon n={n} s={22} />
      <span>{t}</span>
      {caret && <Caret />}
    </button>
  );
}

function Col({ items, w, two = false }: { items: [string, string, boolean?][]; w: string; two?: boolean }) {
  return (
    <div className={`flex shrink-0 flex-col ${two ? "h-[68px]" : "h-[93px]"} ${w}`}>
      {items.map(([n, t, k]) => <Small key={t + n} n={n} t={t} caret={k} />)}
    </div>
  );
}

function Group({ label, w, children, pad = "" }: { label: string; w: string; children: React.ReactNode; pad?: string }) {
  return (
    <div className={`mb-[2px] flex flex-col overflow-hidden ${w}`}>
      <div className="flex h-[95px] shrink-0">{children}</div>
      <div className={`text-center text-[11px] leading-[14px] text-[#3a3a3a] ${pad}`}>{label}</div>
    </div>
  );
}

function Ribbon() {
  const edit = ["pencil", "copy", "move", "rotate", "mirror", "props", "eraser", "scale", "stretch", "mirror2", "brush"];
  return (
    <div className="flex h-[111px] shrink-0 bg-[#f5f5f5]">
      <button aria-label="Desplazar a la izquierda" className="flex w-[14px] shrink-0 items-center justify-center border border-[#aaa]">
        <svg width="5" height="8"><path d="M5 0v8L0 4z" fill="#444" /></svg>
      </button>
      <Group label="Plantillas" w="w-[142px] shrink-0 border-r border-[#aaa]">
        <Big n="library" a="Biblioteca" w="w-[62px]" />
        <div className="w-[4px]" />
        <Col two w="w-[75px]" items={[["crear", "Crear"], ["insertar", "Insertar"]]} />
      </Group>
      <Group label="Estilos" w="w-[204px] shrink-0 border-r border-[#aaa]">
        <Big n="sheets" a="Láminas" w="w-[60px]" />
        <div className="w-[3px]" />
        <Col two w="w-[78px]" items={[["lineStyle", "Línea"], ["hatch", "Relleno"]]} />
        <Col two w="w-[62px]" items={[["bigT", "Texto"], ["dim", "Cota"]]} />
      </Group>
      <Group label="Elementos de dibujo" w="w-[556px] shrink-0 border-r border-[#aaa]">
        <div className="w-[3px]" />
        <Big n="scene" a="Escena" b="3D" caret on w="w-[48px]" />
        <Big n="files" a="Insertar" b="ficheros" caret w="w-[52px]" />
        <Big n="symbols" a="Símbolos" b="de usuario" caret w="w-[64px]" />
        <div className="w-[6px]" />
        <Col w="w-[84px]" items={[["line", "Línea"], ["arc", "Arco", true], ["poly", "Polígono"]]} />
        <Col w="w-[121px]" items={[["ellipse", "Elipses", true], ["rectangle", "Rectángulos", true], ["textbox", "Cuadro de texto"]]} />
        <Col w="w-[82px]" items={[["tag", "Etiqueta"], ["text", "Texto"], ["table", "Tablas", true]]} />
        <Col w="w-[94px]" items={[["section", "Sección"], ["link", "Vínculo"], ["measure", "Acotación", true]]} />
      </Group>
      <Group label="Organización" w="w-[224px] shrink-0 border-r border-[#aaa]">
        <Big n="front" a="Traer al" b="frente" w="w-[54px]" />
        <Big n="rear" a="Enviar" b="al fondo" w="w-[46px]" />
        <div className="w-[7px]" />
        <Col w="w-[114px]" items={[["fwd", "Mover adelante"], ["back", "Mover atrás"], ["compact", "Compactar"]]} />
      </Group>
      <Group label="Edición" w="min-w-0 flex-1" pad="pl-5">
        <Big n="compose" a="Composición" b="de láminas" w="w-[84px]" />
        <Big n="replace" a="Sustitución" b="de textos" w="w-[69px]" />
        <div className="grid h-[92px] w-[241px] shrink-0 grid-cols-[repeat(6,39px)] grid-rows-2 border-x border-[#aaa] px-[3px] pt-[3px]">
          {edit.map((n) => (
            <button key={n} aria-label={n} className="flex items-center justify-center"><Icon n={n} s={29} /></button>
          ))}
        </div>
        <div className="grid h-[92px] w-[45px] shrink-0 grid-rows-2 border-r border-[#aaa] pt-[3px]">
          {["cubeHex", "cubeOpen"].map((n) => (
            <button key={n} aria-label={n} className="flex items-center justify-center"><Icon n={n} s={30} /></button>
          ))}
        </div>
        <div className="w-[6px] shrink-0" />
        <Big n="issues" a="Incidenci" w="w-[49px]" />
      </Group>
      <button aria-label="Desplazar a la derecha" className="flex w-[14px] shrink-0 items-center justify-center border border-[#aaa] bg-white">
        <svg width="5" height="8"><path d="M0 0v8l5-4z" fill="#111" /></svg>
      </button>
    </div>
  );
}

function SitePlan() {
  const hx = [424, 578, 736, 887];
  const rows = [597, 665, 733, 800, 868, 908, 972];
  const top = [496, 511, 524, 537];
  return (
    <svg viewBox="18 42 1305 1630" width="435" height="551" preserveAspectRatio="none" className="shrink-0" aria-hidden="true">
      <g fill="none" stroke="#999" strokeWidth="2">
        <path d="M330 443L365 430 420 408H974L984 1000 990 1238H750M330 443l10 62M340 512L174 553 186 690M190 692L232 1048 178 1080 200 1247h62M390 1243h300M722 1190l28 48M215 1204l42 38M390 1185v58" strokeDasharray="10 5" />
        <path d="M174 553L338 514" strokeDasharray="8 48" strokeWidth="11" stroke="#666" />
        <path d="M417 408H916" strokeDasharray="6 54" strokeWidth="12" stroke="#666" />
        <path d="M974 408L984 1000M190 692L232 1048M178 1080l22 167" strokeDasharray="6 54" strokeWidth="13" stroke="#777" />
        <path d="M390 1243h300M750 1238h240" strokeDasharray="5 55" strokeWidth="14" stroke="#777" />
        <path d="M397 457L912 502V757M912 790V1004L397 1007V457" strokeWidth="2.500" stroke="#999" />
        <path d="M397 457L912 502" strokeDasharray="2 41" strokeWidth="11" />
        <path d="M397 1007L912 1004" strokeDasharray="2 41" strokeWidth="10" />
        <path d="M397 495v512M912 502v255M912 790v214" strokeDasharray="2 41" strokeWidth="11" />
        <path d="M218 575L305 548V664H218z" />
        <path d="M190 692H346L336 1050H232" strokeDasharray="14 3" stroke="#a38a90" />
      </g>
      <path d="M217 722H312V1032L248 1035z" fill="#7b78c1" stroke="#9a9ac0" strokeWidth="2" />
      <g fill="none">
        <path d="M265 597L760 124" stroke="#8d8a7c" strokeWidth="20" />
        <path d="M265 597L760 124" stroke="#e4e2da" strokeWidth="15" />
        <path d="M265 597L760 124" stroke="#8b877b" strokeWidth="13" strokeDasharray="2 9" />
        <path d="M265 597L760 124" stroke="#8b877b" strokeWidth="3" />
        <path d="M175 687L265 597" stroke="#998013" strokeWidth="20" />
        <path d="M248 600l12-13 18 10-6 18-14-2z" fill="#d8b31a" stroke="#86751c" strokeWidth="3" />
        <path d="M182 680L268 598" stroke="#fad31b" strokeWidth="12" />
        <path d="M172 690l14-13" stroke="#837d66" strokeWidth="17" />
      </g>
      {[{ c: "#a08b6a", w: 11 }, { c: "#ffb04f", w: 5 }].map(({ c, w }) => (
        <g key={c} stroke={c} strokeWidth={w} fill="none">
          <path d="M424 496L578 508 736 524 887 537" />
          {rows.map((y) => <path key={y} d={y === 733 ? "M424 733H736L887 737" : `M424 ${y}H887`} />)}
          <path d="M424 496V972M578 508V597L580 665V908L577 972M736 524V972M887 537V972" />
        </g>
      ))}
      <g fill="#ffb04f" stroke="#b8935c" strokeWidth="2">
        {hx.map((x, i) => <rect key={x} x={x - 9} y={top[i] - 8} width="18" height="17" />)}
        <rect x="567" y="499" width="21" height="37" />
        <rect x="413" y="517" width="22" height="23" />
        {rows.map((y) =>
          hx.map((x, i) => {
            const r = y === 972 ? (i === 1 ? 11 : 9) : i === 1 || i === 2 ? 13 : 11;
            return <rect key={`${x}-${y}`} x={x - r} y={y - r} width={2 * r} height={2 * r} />;
          }),
        )}
        <rect x="770" y="964" width="18" height="16" />
        <rect x="406" y="709" width="75" height="20" />
        <rect x="424" y="739" width="43" height="13" />
        <rect x="406" y="745" width="28" height="25" />
        <rect x="434" y="767" width="39" height="12" />
        <rect x="890" y="771" width="88" height="12" />
      </g>
      <rect x="957" y="761" width="18" height="31" fill="#999" />
      <g fill="#fff" stroke="#777" strokeWidth="2.500">
        <rect x="957" y="978" width="19" height="18" rx="3" />
        <rect x="957" y="1017" width="19" height="18" rx="3" />
      </g>
      <rect x="949" y="1051" width="42" height="133" fill="#a69141" stroke="#8b7a3a" strokeWidth="2" />
      <rect x="757" y="1174" width="103" height="38" fill="#cfcfcf" stroke="#888" strokeWidth="2.500" />
      <rect x="872" y="1178" width="60" height="34" fill="#8f6957" stroke="#6b5145" strokeWidth="2.500" />
      <g fill="none">
        <path d="M424 1199H676V1119H886V1053" stroke="#7d7d7d" strokeWidth="9" />
        <path d="M444 1199H676V1119H886V1053" stroke="#c4161c" strokeWidth="5" strokeDasharray="20 22" />
        <path d="M414 1209H690V1129H893V1062" stroke="#888" strokeWidth="5" strokeDasharray="3 6" />
        <path d="M328 1176V1250" stroke="#555" strokeWidth="8" strokeDasharray="6 11" />
        <path d="M984 1253V1292" stroke="#555" strokeWidth="5" strokeDasharray="4 13" />
        <path d="M159 1317V1513M1004 1300V1495" stroke="#999" strokeWidth="3" />
        <path d="M159 1338V1513M1004 1324V1495" stroke="#999" strokeWidth="11" strokeDasharray="2 41" />
        <path d="M160 1317H266M390 1314L988 1303M152 1514L997 1495" stroke="#858585" strokeWidth="8" />
        <path d="M162 1317H266M390 1314L988 1303M152 1514L997 1495" stroke="#c4161c" strokeWidth="5" strokeDasharray="19 22" />
        <path d="M266 1318H390" stroke="#999" strokeWidth="4" strokeDasharray="4 6" />
        <path d="M176 1412H270M396 1405L988 1392" stroke="#888" strokeWidth="6" strokeDasharray="5 12.500" />
        <path d="M1026 1483H1250" stroke="#666" strokeWidth="8" strokeDasharray="15 37" />
      </g>
    </svg>
  );
}

function QrCode() {
  const N = 29;
  let d = "";
  let seed = 77;
  const finder = (x: number, y: number) => (x < 8 && y < 8) || (x > N - 9 && y < 8) || (x < 8 && y > N - 9);
  for (let y = 0; y < N; y++)
    for (let x = 0; x < N; x++) {
      seed = (seed * 1103515245 + 12345) % 2147483648;
      if (!finder(x, y) && seed / 2147483648 > 0.45) d += `M${x} ${y}h1v1h-1z`;
    }
  return (
    <svg viewBox="-1 -1 31 31" width="42" height="42" className="ml-3 shrink-0 bg-white" aria-hidden="true">
      <path d={d} fill="#222" />
      {[[0, 0], [N - 7, 0], [0, N - 7]].map(([x, y]) => (
        <g key={`${x}-${y}`}>
          <rect x={x + 0.5} y={y + 0.5} width="6" height="6" fill="none" stroke="#222" />
          <rect x={x + 2} y={y + 2} width="3" height="3" fill="#222" />
        </g>
      ))}
    </svg>
  );
}

function TitleBlock() {
  const rows = [
    ["Nombre del cliente:", "CYPE Ingenieros, S.A", "Nombre del plano:", "Fases constructivas  1", "Fecha:", "08/11/2024", "nº:", "01"],
    ["Nombre del proyecto:", "Ayuntamiento", "Dirección:", "Av. de Loring, 4, Alicante", "Estado del proyecto:", "En proceso", "Escala:", "1:200"],
    ["Arquitecto:", "CYPE Ingenieros, S.A", "Diseñado por:", "CYPE", "Comprobado por:", "Rocío", "Fdo.:", ""],
  ];
  return (
    <div className="flex h-[77px] border-t border-black bg-[#d5d5d5]">
      <div className="flex flex-1 items-center justify-end pr-[11px] pt-[2px]">
        <svg viewBox="0 0 42 40" width="42" height="40" className="shrink-0" aria-label="cype">
          <path d="M2 4q1-4 6-3l30 14q5 4 1 8L9 39q-5 2-6-3Q-1 20 2 4z" fill="#d4181f" stroke="#a00f15" />
          <text x="4" y="24" fontSize="13" fontWeight="700" fill="#fff" fontFamily="Liberation Sans, sans-serif">cype</text>
        </svg>
        <div className="ml-2 flex w-[114px] flex-col">
          <div className="flex items-center gap-[2px] text-[#4a4a4a]">
            <svg viewBox="0 0 16 16" width="14" height="14" fill="none" stroke="#4a4a4a" strokeWidth="2">
              <circle cx="5" cy="5" r="3" /><circle cx="11" cy="5" r="3" /><circle cx="5" cy="11" r="3" /><circle cx="11" cy="11" r="3" />
            </svg>
            <span className="text-[16px] leading-[18px] font-bold whitespace-nowrap">BIM<span className="text-[11px] font-normal">server.center</span></span>
          </div>
          <p className="mt-[2px] whitespace-pre pl-1 text-[6px] leading-[6px] text-[#666]">
            {"Proyecto desarrollado con tecnología\nBIMserver.center.\nVisualización del modelo BIM y\nrepresentación en realidad aumentada\nen el siguiente QR:"}
          </p>
        </div>
        <QrCode />
      </div>
      <div className="flex w-[368px] flex-col divide-y divide-black bg-white">
        {rows.map((r, i) => (
          <div key={i} className="grid flex-1 grid-cols-[111px_104px_109px_1fr] whitespace-pre">
            {[0, 2, 4].map((k) => (
              <div key={k} className="pt-[2px] pl-[12px]">
                <div className="text-[6px] leading-[8px] text-[#777]">{r[k]}</div>
                <div className="pl-[10px] text-[7px] leading-[10px] text-[#111]">{r[k + 1]}</div>
              </div>
            ))}
            <div className="bg-[#d5d5d5] pt-[2px] pr-[8px] pl-[4px]">
              <div className="text-[6px] leading-[8px] text-[#777]">{r[6]}</div>
              <div className="text-right text-[8px] leading-[8px] font-bold text-[#111]">{r[7]}</div>
            </div>
          </div>
        ))}
      </div>
    </div>
  );
}

function Workspace() {
  const items: [string, string][] = [["folder", "Biblioteca"], ["bucket", "Atributos de dibujo"], ["insert", "Insertar"], ["wand", "Insertar vistas predefinidas"]];
  return (
    <div className="relative flex-1 overflow-hidden bg-linear-to-b from-[#808080] to-[#d4d4d4]">
      <div className="absolute top-[12px] left-[186px] w-[1024px]">
        <div className="text-right font-['Noto_Sans',sans-serif] text-[17px] leading-[21px] text-[#111]">DIN A2 - Horizontal (594x420) mm</div>
        <div className="h-[725px] border border-black bg-white pt-[17px] pr-[25px] pb-[17px] pl-[26px]">
          <div className="flex h-full flex-col justify-between border border-black">
            <div className="flex justify-between pt-4 pr-8 pl-[15px]">
              <div className="flex w-[442px] overflow-hidden border border-[#333] pl-[12px]"><SitePlan /></div>
              <div className="flex w-[435px] justify-center overflow-hidden border border-[#333]"><SitePlan /></div>
            </div>
            <TitleBlock />
          </div>
        </div>
      </div>
      <div className="absolute top-[5px] left-[3px] w-[181px] border border-[#555] bg-[#f7f7f7]">
        <div className="flex h-[23px] items-center bg-[#646464] px-[7px] text-[10px] text-white">
          <span className="size-[12px] border border-t-2 border-white" />
          <span className="flex-1 text-center">Escena 3D</span>
          <svg width="15" height="11" className="mr-[14px]" aria-hidden="true"><path d="M0 5.500h5M5.500 0v11M5.500 2.500h8v6h-8M5 7.500h9" fill="none" stroke="#fff" /></svg>
          <button aria-label="Cerrar paleta"><Cross color="#fff" s={10} /></button>
        </div>
        {items.map(([n, t], i) => (
          <button
            key={t}
            className={`flex w-full items-center gap-1 whitespace-nowrap text-[#3a3a3a] ${i === 3 ? "h-[26px] border-3 border-[#cc1f2d] bg-[#cce8f6] pl-[3px]" : "h-6 pl-[6px]"}`}
          >
            <Icon n={n} s={15} />
            {t}
          </button>
        ))}
      </div>
    </div>
  );
}

function Editor() {
  const sheets = ["shLib", "shAdd", "shCopy", "shDel", "shEdit", "shPrint", "up", "down"];
  return (
    <section className="absolute top-[49px] right-[129px] bottom-px left-[131px] flex flex-col border border-[#0a4fa3] bg-[#2f7dcd] px-[4px] pb-[4px]">
      <header className="flex h-[30px] shrink-0 items-center pt-[3px] text-white">
        <h2 className="flex-1 text-center">Edición de láminas</h2>
        <WinButtons />
      </header>
      <div className="flex h-6 shrink-0 items-center bg-[#d7d7d7]">
        <TBtn n="save" w="w-[25px]" /><TBtn n="undo" /><TBtn n="redo" c="text-[#aaa]" /><TBtn n="search" />
        <span className="flex-1" />
        {["zPrev", "zFit", "zX2", "redraw", "zWin", "hand", "orbit", "cascade"].map((n) => <TBtn key={n} n={n} c={n === "orbit" ? "text-[#999]" : undefined} />)}
        <VSep />
        {["rect", "ruler", "perp", "angle", "dotsOff", "comment", "tools"].map((n) => <TBtn key={n} n={n} on={n === "rect" || n === "comment"} />)}
        <VSep />
        <TBtn n="layout" />
      </div>
      <Ribbon />
      <div className="flex min-h-0 flex-1 bg-[#efefef]">
        <aside className="flex w-[246px] shrink-0 flex-col">
          <PanelHead title="Láminas" />
          <div className="flex h-[30px] shrink-0 items-center">
            {sheets.map((n) => (
              <button key={n} aria-label={n} className="flex w-[31px] shrink-0 items-center justify-start pl-[3px]"><Icon n={n} s={22} /></button>
            ))}
          </div>
          <ul className="flex-1 bg-white text-black">
            <li className="flex h-5 items-center gap-[5px] pl-[7px] font-bold text-[#444]"><Chevron /> Pendiente de asignar</li>
            {[1, 2, 3, 4].map((k) => (
              <li key={k} className={`flex h-5 items-center pl-[44px] whitespace-pre ${k === 1 ? "bg-[#cce8ff]" : ""}`}>{`Fases constructivas  ${k}`}</li>
            ))}
          </ul>
        </aside>
        <div className="ml-2 flex min-w-0 flex-1 flex-col">
          <PanelHead title="Área de trabajo" tools={false} />
          <Workspace />
        </div>
      </div>
      <footer className="flex h-[19px] shrink-0 items-center gap-2 bg-[#efefef] pl-2 text-black">
        <Icon n="info" s={16} /> Escena 3D - Insertar vistas predefinidas
      </footer>
    </section>
  );
}

function Check({ id, label, on = false }: { id: string; label: string; on?: boolean }) {
  return (
    <span className="flex items-center gap-[3px]">
      <span className="grid">
        <input id={id} type="checkbox" defaultChecked={on} className="peer col-start-1 row-start-1 size-[13px] appearance-none rounded-[3px] border border-[#666] bg-[#f6f6f6] checked:border-[#0560b6] checked:bg-[#0560b6]" />
        <svg viewBox="0 0 13 13" className="pointer-events-none invisible col-start-1 row-start-1 size-[13px] peer-checked:visible" aria-hidden="true">
          <path d="M3.500 6.500l2 2 4-4" fill="none" stroke="#fff" />
        </svg>
      </span>
      <label htmlFor={id}>{label}</label>
    </span>
  );
}

function Drop({ id, value, w, icon }: { id: string; value: string; w: string; icon?: string }) {
  return (
    <span className={`flex h-[26px] items-center rounded-[2px] border border-[#858585] bg-white pr-[5px] pb-px ${w}`}>
      {icon && <span className="pl-[7px]"><Icon n={icon} s={15} /></span>}
      <select id={id} defaultValue={value} className={`h-full min-w-0 flex-1 appearance-none bg-transparent ${icon ? "pl-[7px]" : "pl-[5px]"}`}>
        <option>{value}</option>
      </select>
      <svg width="9" height="6" className="shrink-0" aria-hidden="true"><path d="M.5 1l4 4 4-4" fill="none" stroke="#666" /></svg>
    </span>
  );
}

const VIEWS: [string, boolean][] = [
  ["3D", true], ["Cartel entrada-", true], ["Edificio 1 - Cubierta", true], ["Edificio 1 - Planta 1", true],
  ["Edificio 1 - Planta Baja", true], ["Edificio 1 - Sobre cubierta", true], ["Edificio 1 - Terreno", true],
  ["Edificio 2 - Cubierta", true], ["Edificio 2 - Planta baja", true], ["Edificio 2 - Primera planta", true],
  ["Fase 1.1: Excavación", true], ["Fase 1: Implantación", false], ["Fase 2.1: Cimentación (Armadura)", false],
  ["Fase 2.2: Instalaciones cimentación", true], ["Fase 2.3: Cimentación (Hormigonado)", false],
  ["Fase 2: Cimentación", true], ["Fase 3.1: Pilares 1 (armadura)", true], ["Fase 3.2: Pilares 1 (hormigonado)", true],
  ["Fase 3.3: Forjado 1", false], ["Fase 3.4: Pilares 2", true], ["Fase 3.5: Forjado 2", false],
  ["Fase 3: Estructura", true], ["Fase 4.1 Cerramientos exteriores 2 ...", false], ["Fase 4.3 Cerramiento exterior cubierta", false],
];

function ViewsTable() {
  return (
    <div className="flex min-h-0 flex-1 overflow-hidden">
      <div className="w-[390px] overflow-hidden">
        <table className="w-full table-fixed border-collapse">
          <thead>
            <tr className="h-[23px] bg-[#efefef]">
              <th className="w-[57px] border-r border-[#d5d5d5] p-0 text-center font-normal">Generar</th>
              <th className="w-[224px] border-r border-[#d5d5d5] p-0 pl-[6px] text-left font-normal">
                <span className="flex flex-col pb-[3px]">
                  <svg width="9" height="5" className="ml-[102px]" aria-hidden="true"><path d="M.5 4.500l4-4 4 4" fill="none" stroke="#111" strokeWidth="1.200" /></svg>
                  <span className="leading-[15px]">Referencia</span>
                </span>
              </th>
              <th className="p-0 pr-[7px] text-right font-normal whitespace-nowrap">Divisor de escala</th>
            </tr>
          </thead>
          <tbody>
            {VIEWS.map(([name, on], i) => (
              <tr key={name} className={`h-5 border-b border-[#efefef] ${i === 0 ? "bg-[#cce8ff]" : ""}`}>
                <td className="border-r border-[#efefef] p-0">
                  <span className="grid justify-center">
                    <input type="checkbox" aria-label={name} defaultChecked={on} className="peer col-start-1 row-start-1 size-[11px] appearance-none border border-[#666] bg-white" />
                    <svg viewBox="0 0 11 11" className="pointer-events-none invisible col-start-1 row-start-1 size-[11px] peer-checked:visible" aria-hidden="true">
                      <path d="M2.500 5l2 2.500 4-5" fill="none" stroke="#000" strokeWidth="2" />
                    </svg>
                  </span>
                </td>
                <td className={`truncate border-r border-[#efefef] py-0 pr-0 pl-[6px] ${i === 0 ? "bg-[#bfbfbf]" : ""}`}>{name}</td>
                <td className="py-0 pr-[7px] pl-0 text-right">50</td>
              </tr>
            ))}
          </tbody>
        </table>
      </div>
      <div className="w-[17px] bg-[#f0f0f0] pt-[17px]"><div className="ml-[8px] h-[278px] w-[2px] bg-[#888]" /></div>
    </div>
  );
}

function Box({ head, children }: { head: React.ReactNode; children: React.ReactNode }) {
  return (
    <fieldset className="block min-w-0 border border-[#c6c6c6] bg-white">
      <div className="flex h-[18px] items-center bg-[#d7d7d7] pl-[6px]">{head}</div>
      <div className="flex flex-col py-[4px] pl-[6px]">{children}</div>
    </fieldset>
  );
}

function ViewsDialog() {
  return (
    <section role="dialog" aria-label="Insertar vistas predefinidas" className="absolute top-[370px] bottom-[25px] left-[67px] flex w-[908px] flex-col border border-[#0a4fa3] bg-[#2f7dcd] px-[4px] pb-[4px] text-black">
      <header className="flex h-[30px] shrink-0 items-center pt-[3px] text-white">
        <h2 className="flex-1 text-center">Insertar vistas predefinidas</h2>
        <WinButtons />
      </header>
      <div className="flex min-h-0 flex-1 bg-[#efefef] px-2 pt-2 pb-[9px]">
        <div className="flex w-[415px] shrink-0 flex-col border border-[#c6c6c6] bg-white pb-[3px] pl-[3px]">
          <div className="-ml-[3px] flex h-[18px] shrink-0 items-center bg-[#d7d7d7] pl-[6px]">Selección de las vistas a generar</div>
          <div className="flex h-[27px] shrink-0 items-center gap-[9px] pl-[5px]">
            <button aria-label="Subir"><svg width="14" height="8"><path d="M0 8h14L7 0z" fill="#333" /></svg></button>
            <button aria-label="Bajar"><svg width="14" height="8"><path d="M0 0h14L7 8z" fill="#333" /></svg></button>
          </div>
          <ViewsTable />
        </div>
        <div className="flex w-2 shrink-0 flex-col items-center justify-center gap-[2px]">
          {[0, 1, 2, 3].map((k) => <span key={k} className="h-[2px] w-[3px] bg-[#b5b5b5]" />)}
        </div>
        <div className="flex min-w-0 flex-1 flex-col gap-2">
          <Box head="Apariencia">
            <div className="flex h-[33px] items-center pr-[7px]">
              <label htmlFor="modo" className="flex-1">Modo de color de las vistas</label>
              <Drop id="modo" value="Imagen monocroma" w="w-[170px]" icon="cubeGray" />
              <button aria-label="Información" className="ml-[7px]"><Icon n="info" s={18} /></button>
            </div>
          </Box>
          <Box head={<Check id="titulo" label="Título de las vistas" on />}>
            <div className="flex h-[30px] items-center pr-[6px]">
              <label htmlFor="estilo" className="flex-1">Estilo de texto</label>
              <Drop id="estilo" value="Anotación - Arial, Normal, 12 pt." w="w-[273px]" />
            </div>
            <div className="flex h-[25px] items-center"><Check id="divisor" label="Incluir el divisor de escala" on /></div>
          </Box>
          <Box head="Láminas">
            <div className="flex h-[30px] items-center pr-[6px]">
              <label htmlFor="formato" className="flex-1">Formato para las láminas nuevas</label>
              <Drop id="formato" value="DIN A2 - Horizontal" w="w-[144px]" />
            </div>
            <div className="-ml-[3px] flex h-[25px] items-center"><Check id="nueva" label="Insertar las vistas generadas en una lámina nueva" /></div>
          </Box>
        </div>
      </div>
      <footer className="flex h-10 shrink-0 items-center justify-between border-t border-[#cdcdcd] bg-[#e8e8e8] px-[7px]">
        <button className="h-[25px] w-[67px] rounded-[4px] border border-[#0067c0] bg-[#fdfdfd]">Aceptar</button>
        <button className="h-[25px] w-[67px] rounded-[4px] border border-[#cfcfcf] bg-[#fdfdfd]">Cancelar</button>
      </footer>
    </section>
  );
}

type Node = { t: string; head?: boolean; open?: boolean; sel?: boolean; icon?: string };

function Tree({ nodes, blue = false }: { nodes: Node[]; blue?: boolean }) {
  return (
    <ul className={`min-h-0 flex-1 overflow-hidden bg-white ${blue ? "text-[#1c4a9c]" : "text-black"}`}>
      {nodes.map((x, i) => (
        <li key={i} className={`flex h-5 items-center whitespace-nowrap ${x.head ? "gap-[5px] pl-[7px] font-bold" : "pl-[44px]"} ${x.head && !blue ? "text-[#444]" : ""} ${x.sel ? "bg-[#cce8ff]" : ""}`}>
          {x.head && <span className="w-[13px]"><Chevron open={x.open !== false} color="#444" /></span>}
          {x.icon && <Icon n={x.icon} s={15} />}
          {x.t}
        </li>
      ))}
    </ul>
  );
}

function LeftPanels() {
  return (
    <aside className="flex w-[300px] shrink-0 flex-col">
      <PanelHead title="Vistas" />
      <div className="flex h-6 shrink-0 items-center">
        {["cubePlus", "cubePen", "cubeCopy", "cubeDel", "viewEye"].map((n) => (
          <button key={n} aria-label={n} className="flex w-[25px] shrink-0 items-center justify-center"><Icon n={n} s={15} /></button>
        ))}
        <VSep />
      </div>
      <div className="flex h-[234px] flex-col">
        <Tree nodes={[
          { t: "Plantas", head: true }, { t: "Edificio 1 - Sobr" }, { t: "Edificio 1 - Cubi" }, { t: "Edificio 2 - Cubi" }, { t: "Edificio 1 - Plant" },
          { t: "Edificio 2 - Prim" }, { t: "Edificio 1 - Plant" }, { t: "Edificio 1 - Terre" }, { t: "Edificio 2 - Plant" }, { t: "Vistas 3", head: true }, { t: "3D", sel: true },
        ]} />
      </div>
      <div className="h-2 shrink-0" />
      <PanelHead title="Niveles" />
      <div className="flex h-6 shrink-0 items-center">
        <button aria-label="Anterior" className="flex h-[23px] w-[12px] items-center justify-center border border-[#aaa]"><svg width="4" height="8"><path d="M4 0v8L0 4z" fill="#444" /></svg></button>
        <button aria-label="Nuevo nivel" className="ml-[7px]"><Icon n="levels" s={15} /></button>
        <button aria-label="Nuevo grupo" className="ml-[9px]"><Icon n="layers" s={15} /></button>
      </div>
      <div className="flex h-[189px] flex-col">
        <Tree blue nodes={[
          { t: "Edificio", head: true, sel: true }, { t: "Sobr" }, { t: "Cubi" }, { t: "Plant" }, { t: "Plant" }, { t: "Terre" },
          { t: "Edificio", head: true }, { t: "Cubi" }, { t: "Prim" }, { t: "Plant" },
        ]} />
      </div>
      <div className="h-2 shrink-0" />
      <PanelHead title="Elementos" />
      <div className="flex h-6 shrink-0 items-center">
        {["expand1", "expand2", "expand3"].map((n) => (
          <button key={n} aria-label={n} className="flex w-[25px] shrink-0 items-center justify-center"><Icon n={n} s={16} /></button>
        ))}
      </div>
      <Tree nodes={[
        { t: "Mod", head: true, open: false, icon: "cubeBlue" }, { t: "Cate", head: true, icon: "tree" },
        ...["Apar", "Bara", "Barr", "Celo", "Cim", "Con", "Des", "Edifi", "Elem", "Esca", "Fach", "Forja", "Mapas"].map((t) => ({ t })),
      ]} />
    </aside>
  );
}

function RightPanels() {
  const names: Record<number, string> = { 3: "ión", 5: "la", 11: "articula...", 12: "elescó...", 13: "era", 15: "ón", 17: "con m...", 18: "ciment...", 19: "instala...", 20: "ciment..." };
  return (
    <aside className="flex w-[129px] shrink-0 flex-col">
      <PanelHead title="" />
      <div className="mt-6 flex h-[384px] shrink-0 overflow-hidden">
        <ul className="w-[113px] overflow-hidden bg-white">
          {Array.from({ length: 20 }, (_, i) => (
            <li key={i} className={`flex h-5 items-center justify-between pr-[7px] pl-px ${i === 0 ? "bg-[#cce8ff]" : ""}`}>
              <span>{i === 14 ? "ta" : ""}</span>
              <Icon n={i < 2 ? "eye" : "eyeOff"} s={16} />
            </li>
          ))}
        </ul>
        <div className="flex-1 pt-[17px] pl-[7px]"><div className="h-[229px] w-[2px] bg-[#888]" /></div>
      </div>
      <div className="h-[7px] shrink-0" />
      <PanelHead title="" />
      <div className="mt-[2px] flex min-h-0 flex-1 overflow-hidden">
        <ul className="w-[113px] overflow-hidden bg-white">
          {Array.from({ length: 21 }, (_, i) => (
            <li key={i} className="flex h-5 items-center gap-3 pr-[7px] pl-px">
              <span className="flex-1 whitespace-nowrap">{names[i] ?? ""}</span>
              <Icon n="eye" s={16} />
              <Icon n="lock" s={16} />
            </li>
          ))}
        </ul>
        <div className="flex-1 pt-[17px] pl-[7px]"><div className="h-[90px] w-[2px] bg-[#888]" /></div>
      </div>
    </aside>
  );
}

function RibbonLink({ n, a, b, w }: { n: string; a: string; b?: string; w: string }) {
  return (
    <button className={`flex shrink-0 flex-col items-center leading-[15px] whitespace-nowrap text-[#3a3a3a] ${w}`}>
      <Icon n={n} s={31} />
      <span className="mt-[5px]">{a}</span>
      {b && <span>{b}</span>}
    </button>
  );
}

export default function App() {
  return (
    <main className="relative flex h-screen flex-col overflow-hidden bg-[#efefef] font-['Liberation_Sans',Arial,sans-serif] text-[12px] leading-[16px]">
      <div className="flex h-[49px] shrink-0">
        <div className="flex w-[47px] shrink-0 items-center justify-center border-r border-b border-[#d0d0d0] bg-[#f5f5f5]">
          <span className="flex size-10 items-center justify-center rounded-[3px] bg-linear-to-b from-[#3bb273] to-[#0d8a4f]"><Icon n="app" s={36} /></span>
        </div>
        <div className="flex min-w-0 flex-1 flex-col">
          <div className="flex h-[26px] shrink-0 bg-[#1a60ab] text-white">
            <div className="flex w-[261px] shrink-0 items-center bg-[#f5f5f5]">
              <TBtn n="save" s={17} w="w-[25px]" /><TBtn n="undo" c="text-[#999]" /><TBtn n="redo" c="text-[#999]" /><TBtn n="search" /><TBtn n="printer" />
              <button aria-label="plotter" className="mx-[2px] flex h-[25px] w-[23px] items-center justify-center rounded-[4px] border border-[#7aa5bb] bg-[#cce8f6]"><Icon n="plotter" s={18} /></button>
              <TBtn n="exportRed" w="w-[25px]" />
              <VSep />
              <TBtn n="bimRefresh" s={16} w="w-[24px]" /><TBtn n="bimShare" s={16} w="w-[24px]" /><TBtn n="more" s={13} w="w-[25px]" />
            </div>
            <h1 className="flex flex-1 items-center justify-center pr-[3px]">CYPE Construction Works - Ejemplo webinar - Terminado planos.ccw</h1>
            <div className="mr-[5px] flex shrink-0 items-center gap-1">
              <svg width="16" height="16" viewBox="0 0 16 16" aria-hidden="true"><circle cx="7" cy="7" r="6.500" fill="#d5ecf7" /><circle cx="7" cy="6" r="3" fill="#7cc0de" /><circle cx="11" cy="11.500" r="4.500" fill="#3f9c35" /><path d="M9 11.500l1.500 1.500 2.500-3" stroke="#fff" fill="none" strokeWidth="1.300" /></svg>
              <span>Maria</span>
              <svg width="16" height="16" viewBox="0 0 16 16" className="ml-1" aria-hidden="true"><path d="M7 0l7 3.500v7L7 14 0 10.500v-7z" fill="#f1f1f1" /><circle cx="11" cy="11.500" r="4.500" fill="#3f9c35" /><path d="M9 11.500l1.500 1.500 2.500-3" stroke="#fff" fill="none" strokeWidth="1.300" /></svg>
              <span>City Hall 2024</span>
            </div>
            <WinButtons min />
          </div>
          <div className="flex h-[23px] items-center bg-[#d7d7d7]">
            <button className="flex h-full w-[138px] items-center justify-center bg-[#f5f5f5] pb-[4px] text-[#3a3a3a]">Proceso constructivo</button>
            <button className="h-full w-[124px] pb-[4px] text-[#3a3a3a]">Control de calidad</button>
            <span className="flex-1" />
            {["zPrev", "zFit", "zX2", "redraw", "zWin", "hand", "orbit", "cascade"].map((n) => <TBtn key={n} n={n} s={17} />)}
            <VSep />
            {["dxf", "dxfRed", "magnet"].map((n) => <TBtn key={n} n={n} s={17} />)}
            <VSep />
            {["rect", "grid", "snap", "keyboard", "ruler", "perp", "angle", "dots", "comment", "tools"].map((n) => <TBtn key={n} n={n} s={17} on={n === "rect" || n === "comment"} />)}
            <VSep />
            <TBtn n="layout" s={17} />
            <VSep />
            <TBtn n="globe" s={17} />
            <TBtn n="book" s={17} />
          </div>
        </div>
      </div>
      <div className="flex h-[97px] shrink-0 justify-between bg-[#f5f5f5]">
        <div className="flex flex-col pt-[5px]">
          <div className="flex flex-1">
            <RibbonLink n="elements" a="Elementos" b="introducidos" w="w-[75px]" />
            <RibbonLink n="units" a="Unidades" b="de obra" w="w-[62px]" />
          </div>
          <div className="w-[196px] pb-[2px] text-center text-[11px] leading-[14px]">Proyecto</div>
        </div>
        <div className="flex w-[128px] flex-col border-l border-[#aaa] pt-[5px]">
          <div className="flex flex-1">
            <RibbonLink n="update" a="Actualizar" w="w-[64px]" />
            <RibbonLink n="share" a="Compartir" w="w-[58px]" />
          </div>
          <div className="pb-[2px] text-center text-[11px] leading-[14px] text-[#3a3a3a]">BIMserver.center</div>
        </div>
      </div>
      <div className="flex min-h-0 flex-1 justify-between">
        <LeftPanels />
        <RightPanels />
      </div>
      <footer className="flex h-[18px] shrink-0 items-center gap-2 bg-[#efefef] pl-2 text-black">
        <Icon n="info" s={16} /> Herramienta de se
      </footer>
      <Editor />
      <ViewsDialog />
    </main>
  );
}
